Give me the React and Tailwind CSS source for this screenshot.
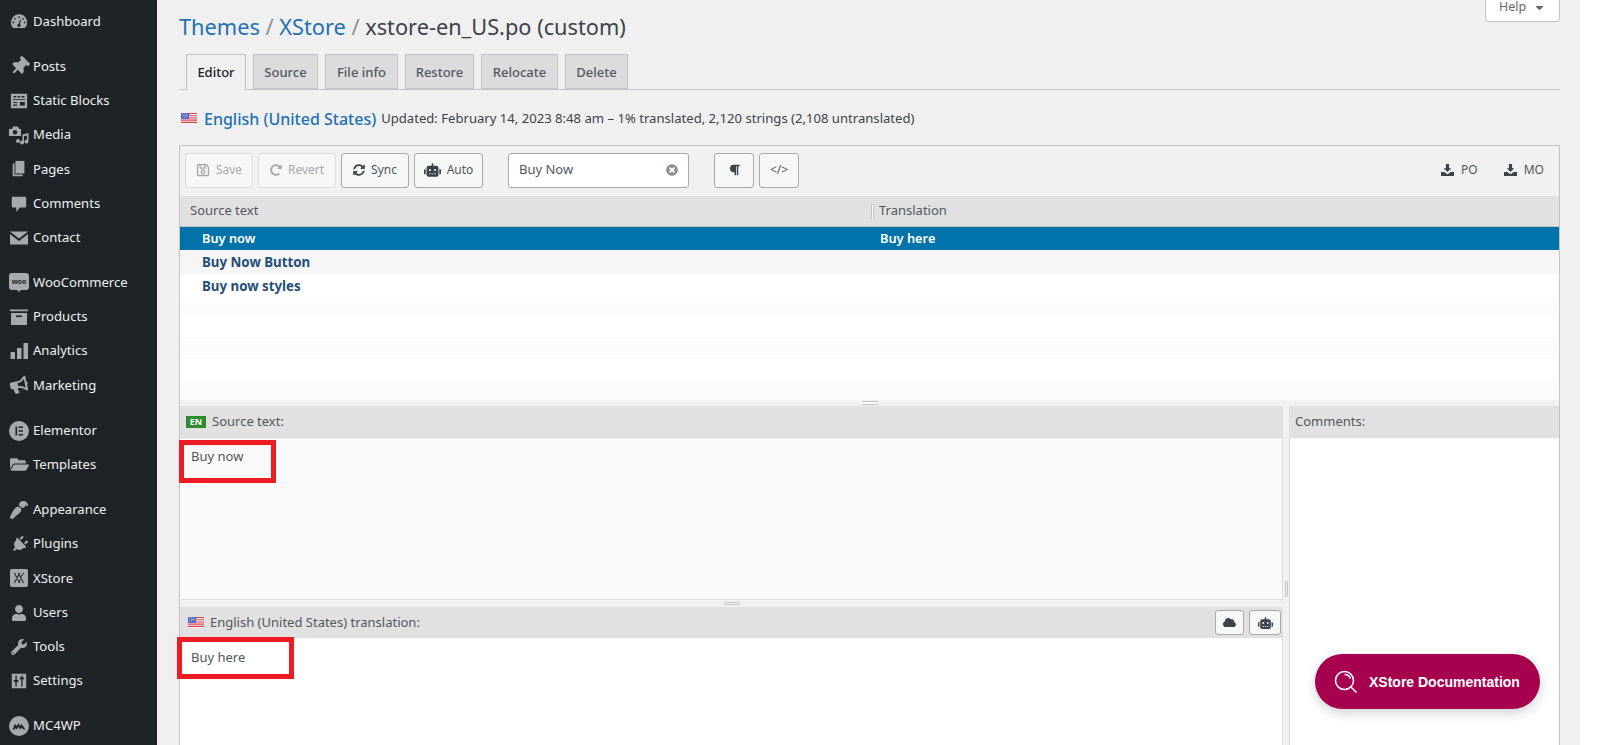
import {
  FaBullhorn, FaCloud, FaFolderOpen, FaParagraph, FaPaintBrush, FaPlug, FaRedoAlt, FaRegSave, FaRobot, FaSyncAlt, FaThumbtack, FaTimesCircle, FaUser, FaWrench, FaCaretDown,
} from 'react-icons/fa';

const Dial = () => (
  <svg viewBox="0 0 20 20" className="w-[18px] h-[18px]" fill="currentColor">
    <path fillRule="evenodd" d="M10 1.5A9 9 0 0 0 1 10.500c0 2.500 1 4.700 2.600 6.300h12.800A9 9 0 0 0 10 1.500zM10 3.500a1 1 0 1 1 0 2 1 1 0 0 1 0-2zM5.500 5.500a1 1 0 1 1 0 2 1 1 0 0 1 0-2zM14.500 5.500a1 1 0 1 1 0 2 1 1 0 0 1 0-2zM3.700 9.500a1 1 0 1 1 0 2 1 1 0 0 1 0-2zM16.300 9.500a1 1 0 1 1 0 2 1 1 0 0 1 0-2zM11.500 7l.8.300-1.200 5.300a1.700 1.700 0 1 1-1.600-.4z" />
  </svg>
);
const StaticBlocks = () => (
  <svg viewBox="0 0 20 20" className="w-[18px] h-[18px]" fill="currentColor">
    <path fillRule="evenodd" d="M1 2h18v16H1zM4 4.500V6h3V4.500zM8.500 4.500V6h3V4.500zM13 4.500V6h3V4.500zM3 8v1h14V8zM3.500 11v1.200h4.500V11zM3.500 14v1.200h4.500V14zM11 11v4h5.500v-4z" />
  </svg>
);
const Media = () => (
  <svg viewBox="0 0 20 20" className="w-[20px] h-[20px]" fill="currentColor">
    <path fillRule="evenodd" d="M0 4h3l1-2.500h5L10 4h2v7H0zM6 5a2.300 2.300 0 1 0 0 4.600A2.300 2.300 0 0 0 6 5z" />
    <path d="M13.500 9.500l6-1.500v8.500a2 2 0 1 1-1.500-1.900V10.500l-3 .8v6.200a2 2 0 1 1-1.500-1.900zM7 16a2 2 0 1 0 4 0 2 2 0 0 0-4 0z" />
  </svg>
);
const Pages = () => (
  <svg viewBox="0 0 20 20" className="w-[18px] h-[18px]" fill="currentColor">
    <path d="M6 1h10v14H6z" />
    <path d="M3 4h2v12h9v2H3z" />
  </svg>
);
const Bubble = () => (
  <svg viewBox="0 0 20 20" className="w-[18px] h-[18px]" fill="currentColor">
    <path d="M3 2h14a1 1 0 0 1 1 1v10a1 1 0 0 1-1 1h-6l-4 5v-5H3a1 1 0 0 1-1-1V3a1 1 0 0 1 1-1z" />
  </svg>
);
const Mail = () => (
  <svg viewBox="0 0 20 20" className="w-[20px] h-[20px]" fill="currentColor">
    <path d="M1 3.500h18L10 10.500z" />
    <path d="M1 6l9 7 9-7v10.500H1z" />
  </svg>
);
const Woo = () => (
  <span className="flex flex-col items-center w-[20px] h-[20px]">
    <span className="w-[20px] h-[17px] bg-[#a7aaad] rounded-[3px] flex items-center justify-center text-[#1d2327] text-[7px] font-bold leading-none">woo</span>
    <span className="w-0 h-0 border-x-[2px] border-x-transparent border-t-[2px] border-t-[#a7aaad]" />
  </span>
);
const Box = () => (
  <svg viewBox="0 0 20 20" className="w-[20px] h-[20px]" fill="currentColor">
    <path fillRule="evenodd" d="M1 2.500h18v1.800H1zM2 6h16v12H2zM7 8.500V10h6V8.500z" />
  </svg>
);
const Bars = () => (
  <svg viewBox="0 0 20 20" className="w-[20px] h-[20px]" fill="currentColor">
    <path d="M1.500 11h4.500v7H1.500zM8 7h4.500v11H8zM14.500 2H19v16h-4.500z" />
  </svg>
);
const Elementor = () => (
  <svg viewBox="0 0 20 20" className="w-[20px] h-[20px]" fill="currentColor">
    <path fillRule="evenodd" d="M10 0a10 10 0 1 0 0 20 10 10 0 0 0 0-20zM6.500 5.500H8v9H6.500zM9.500 5.500h4.500V7H9.500zM9.500 9.250h4.500v1.500H9.500zM9.500 13h4.500v1.500H9.500z" />
  </svg>
);
const XStore = () => (
  <span className="w-[18px] h-[18px] bg-[#a7aaad] rounded-[2px] flex items-center justify-center">
    <svg viewBox="0 0 18 18" className="w-[14px] h-[14px]" fill="none" stroke="#1d2327" strokeWidth="1.300">
      <path d="M3 2.500l7 13M10 2.500l-7 13M8 2.500l7 13M15 2.500l-3.500 5M11 11l-2.500 4" />
    </svg>
  </span>
);
const Sliders = () => (
  <svg viewBox="0 0 20 20" className="w-[18px] h-[18px]" fill="currentColor">
    <path fillRule="evenodd" d="M2 2h16v16H2zM6 4v5H4.300v2H6v5h1.500v-5h1.700V9H7.500V4zM12.500 4v2h-1.700v2h1.700v8H14V8h1.700V6H14V4z" />
  </svg>
);
const Mc4wp = () => (
  <span className="w-[20px] h-[20px] rounded-full bg-[#a7aaad] flex items-center justify-center">
    <svg viewBox="0 0 20 20" className="w-[14px] h-[14px]" fill="#1d2327">
      <path d="M1 15l3-8 3 3 2-4 3 4 2-3 5 8h-3l-2-3-2 3-3-4-2 4-2-2-1 2z" />
    </svg>
  </span>
);
const Download = () => (
  <svg viewBox="0 0 14 14" className="w-[13px] h-[13px]" fill="currentColor">
    <path d="M5.300 0h3.400v4.500h2.300L7 8.500l-4-4h2.300z" />
    <path d="M0 8.500h3.500L7 11l3.500-2.500H14V13H0z" />
  </svg>
);
const Flag = () => (
  <svg viewBox="0 0 16 11" className="w-[16px] h-[11px] shrink-0">
    <rect width="16" height="11" fill="#f4f4f4" />
    <path d="M0 0h16v1.100H0zM0 2.200h16v1.100H0zM0 4.400h16v1.100H0zM0 6.600h16v1.100H0zM0 8.800h16v1.100H0z" fill="#d9414b" />
    <rect width="8" height="5.800" fill="#4a62c4" />
    <path d="M1 1h1M3 1h1M5 1h1M2 2.500h1M4 2.500h1M6 2.500h1M1 4h1M3 4h1M5 4h1" stroke="#fff" strokeWidth=".7" />
  </svg>
);

const menu = [
  [['Dashboard', <Dial />]],
  [
    ['Posts', <FaThumbtack className="w-[19px] h-[19px] rotate-45" />],
    ['Static Blocks', <StaticBlocks />],
    ['Media', <Media />],
    ['Pages', <Pages />],
    ['Comments', <Bubble />],
    ['Contact', <Mail />],
  ],
  [
    ['WooCommerce', <Woo />],
    ['Products', <Box />],
    ['Analytics', <Bars />],
    ['Marketing', <FaBullhorn className="w-[18px] h-[18px] -rotate-12" />],
  ],
  [
    ['Elementor', <Elementor />],
    ['Templates', <FaFolderOpen className="w-[19px] h-[19px]" />],
  ],
  [
    ['Appearance', <FaPaintBrush className="w-[18px] h-[18px] rotate-180" />],
    ['Plugins', <FaPlug className="w-[17px] h-[17px] rotate-45" />],
    ['XStore', <XStore />],
    ['Users', <FaUser className="w-[16px] h-[16px]" />],
    ['Tools', <FaWrench className="w-[16px] h-[16px]" />],
    ['Settings', <Sliders />],
  ],
  [['MC4WP', <Mc4wp />]],
];

const tabs = [
  ['Source', 'w-[65px]'],
  ['File info', 'w-[73px]'],
  ['Restore', 'w-[69px]'],
  ['Relocate', 'w-[77px]'],
  ['Delete', 'w-[63px]'],
];

const Sidebar = () => (
  <aside className="w-[157px] shrink-0 bg-[#1d2327] pt-[4.5px] flex flex-col gap-[11px] text-[#f0f0f1] text-[13.1px]">
    {menu.map((group, i) => (
      <div key={i}>
        {group.map(([label, icon]) => (
          <div key={label} className="h-[34.2px] flex items-center">
            <span className="w-[33px] pl-[5px] shrink-0 flex items-center justify-center text-[#a7aaad]">{icon}</span>
            <span>{label}</span>
          </div>
        ))}
      </div>
    ))}
  </aside>
);

const ToolButton = ({ className, disabled, children }) => (
  <div className={`h-[35px] flex items-center justify-center gap-[6px] rounded-[3px] border text-[12px] bg-[#f6f7f7] ${disabled ? 'border-[#dcdcde] text-[#a7aaad]' : 'border-[#a7aaad] text-[#50575e]'} ${className}`}>
    {children}
  </div>
);

const Toolbar = () => (
  <div className="h-[50px] flex items-center pl-[5px] pr-[15px] pb-[2px]">
    <ToolButton disabled className="w-[68px]"><FaRegSave className="w-[14px] h-[14px]" />Save</ToolButton>
    <ToolButton disabled className="w-[78px] ml-[5px]"><FaRedoAlt className="w-[12px] h-[12px]" />Revert</ToolButton>
    <ToolButton className="w-[68px] ml-[5px]"><FaSyncAlt className="w-[12px] h-[12px] text-[#3c434a]" />Sync</ToolButton>
    <ToolButton className="w-[69px] ml-[5px] gap-[4px]"><FaRobot className="w-[17px] h-[14px] text-[#3c434a]" />Auto</ToolButton>
    <div className="w-[181px] h-[35px] ml-[25px] rounded-[3px] border border-[#a7aaad] bg-white flex items-center justify-between pl-[10px] pr-[10px] text-[13px] text-[#50575e]">
      <span>Buy Now</span>
      <FaTimesCircle className="w-[12px] h-[12px] text-[#8c8f94]" />
    </div>
    <ToolButton className="w-[40px] ml-[25px]"><FaParagraph className="w-[11px] h-[12px] text-[#3c434a]" /></ToolButton>
    <ToolButton className="w-[40px] ml-[5px] text-[11px]">&lt;/&gt;</ToolButton>
    <div className="ml-auto flex items-center text-[12px] text-[#50575e]">
      <span className="flex items-center gap-[7px] text-[#3c434a]"><Download /><span className="text-[#50575e]">PO</span></span>
      <span className="flex items-center gap-[7px] ml-[26px] text-[#3c434a]"><Download /><span className="text-[#50575e]">MO</span></span>
    </div>
  </div>
);

const Table = () => (
  <>
    <div className="h-[31px] bg-[#e1e1e1] border-b border-[#c3c4c7] flex items-center text-[13px] text-[#50575e]">
      <span className="w-[691px] pl-[10px] shrink-0">Source text</span>
      <span className="w-[3px] h-[15px] border-x border-[#c3c4c7] bg-white shrink-0" />
      <span className="pl-[5px]">Translation</span>
    </div>
    <div className="h-[23px] pt-[1px] bg-[#0073aa] flex items-center text-white text-[12.8px] font-semibold">
      <span className="w-[700px] pl-[22px] shrink-0">Buy now</span>
      <span>Buy here</span>
    </div>
    <div className="h-[24px] pt-[1px] bg-[#f6f6f6] flex items-center pl-[22px] text-[13.3px] font-bold text-[#1f4f78]">Buy Now Button</div>
    <div className="h-[24px] pt-[1px] bg-white flex items-center pl-[22px] text-[13.3px] font-bold text-[#1f4f78]">Buy now styles</div>
    <div className="h-[17px] bg-[#fcfcfc]" />
    <div className="h-[22px] bg-white" />
    <div className="h-[22px] bg-[#fcfcfc]" />
    <div className="h-[22px] bg-white" />
    <div className="h-[19px] bg-[#fcfcfc]" />
  </>
);

const Annotation = ({ className }) => (
  <div className={`absolute border-[5px] border-[#ed1c24] ${className}`} />
);

const Panes = () => (
  <div className="flex h-[339px]">
    <div className="w-[1103px] shrink-0 flex flex-col">
      <div className="h-[32px] bg-[#e1e1e1] border-b border-[#d8d8d8] flex items-center pl-[6px] pt-[1px] text-[13px] text-[#50575e]">
        <span className="w-[20px] h-[12px] bg-[#2e8b2e] text-white text-[9px] font-bold leading-[12px] text-center mr-[6px]">EN</span>
        Source text:
      </div>
      <div className="relative h-[162px] bg-[#f9f9f9] border-x border-b border-[#dcdcde] border-l-transparent pl-[10px] pt-[9px] text-[13px] text-[#50575e]">
        <div>Buy now</div>
        <Annotation className="left-[-2px] top-[2px] w-[97px] h-[43px]" />
      </div>
      <div className="h-[7px] flex items-center justify-center">
        <span className="w-[16px] h-[3px] border-y border-[#c3c4c7]" />
      </div>
      <div className="h-[31px] bg-[#e1e1e1] flex items-center pl-[8px] pr-[2px] text-[13px] text-[#50575e]">
        <Flag />
        <span className="ml-[6px] pt-[1px]">English (United States) translation:</span>
        <span className="ml-auto flex gap-[5px]">
          <span className="w-[29px] h-[25px] rounded-[3px] border border-[#a7aaad] bg-[#f6f7f7] flex items-center justify-center text-[#3c434a]"><FaCloud className="w-[13px] h-[11px]" /></span>
          <span className="w-[32px] h-[25px] rounded-[3px] border border-[#a7aaad] bg-[#f6f7f7] flex items-center justify-center text-[#3c434a]"><FaRobot className="w-[15px] h-[12px]" /></span>
        </span>
      </div>
      <div className="relative flex-1 bg-white border-r border-[#dcdcde] pl-[11px] pt-[10px] text-[13px] text-[#50575e]">
        Buy here
        <Annotation className="left-[-3px] top-[-1px] w-[117px] h-[42px]" />
      </div>
    </div>
    <div className="w-[6px] shrink-0 flex items-center justify-center">
      <span className="w-[3px] h-[16px] border-x border-[#c3c4c7] mt-[27px]" />
    </div>
    <div className="flex-1 flex flex-col">
      <div className="h-[32px] bg-[#e1e1e1] flex items-center pl-[6px] text-[13px] text-[#50575e]">Comments:</div>
      <div className="flex-1 bg-white border-l border-[#dcdcde]" />
    </div>
  </div>
);

export default function App() {
  return (
    <div className="flex h-[745px] overflow-hidden bg-white font-['Noto_Sans','Open_Sans',sans-serif]">
      <Sidebar />
      <main className="relative w-[1423px] shrink-0 bg-[#f0f0f1] pl-[22px] pr-[20px]">
        <div className="h-[54px] flex items-start justify-between">
          <h1 className="pt-[10px] text-[21.75px] leading-[34px] text-[#3c434a]">
            <span className="text-[#2271b1]">Themes</span>
            <span className="text-[#8c8f94]"> / </span>
            <span className="text-[#2271b1]">XStore</span>
            <span className="text-[#8c8f94]"> / </span>
            xstore-en_US.po (custom)
          </h1>
          <div className="w-[75px] h-[22px] pb-[7px] rounded-b-[4px] border border-t-0 border-[#c3c4c7] bg-white flex items-center justify-center gap-[7px] text-[12.5px] leading-none text-[#646970]">
            <span>Help</span>
            <FaCaretDown className="w-[13px] h-[13px]" />
          </div>
        </div>
        <div className="h-[36px] flex gap-[7px] pl-[7px] border-b border-[#c3c4c7] text-[13px]">
          <div className="w-[60px] h-[36px] pt-[1px] flex items-center justify-center border border-b-0 border-[#c3c4c7] bg-[#f0f0f1] text-[#1d2327] font-medium">Editor</div>
          {tabs.map(([label, width]) => (
            <div key={label} className={`${width} h-[35px] pt-[2px] flex items-center justify-center border border-[#c3c4c7] bg-[#dcdcde] text-[#50575e] font-medium`}>{label}</div>
          ))}
        </div>
        <div className="h-[55px] flex items-center pt-[2px] pl-[2px] text-[13.1px] text-[#3c434a]">
          <Flag />
          <span className="ml-[7px] text-[16px] font-medium text-[#2271b1]">English (United States)</span>
          <span className="ml-[5px]">Updated: February 14, 2023 8:48 am – 1% translated, 2,120 strings (2,108 untranslated)</span>
        </div>
        <section className="border border-b-0 border-[#c3c4c7] bg-[#f1f1f1] h-[600px]">
          <Toolbar />
          <Table />
          <div className="h-[6px] flex items-center justify-center">
            <span className="w-[16px] h-[4px] border-y border-[#c3c4c7] bg-white" />
          </div>
          <Panes />
        </section>
        <div className="absolute left-[1158px] top-[654px] w-[225px] h-[55px] pt-[1px] rounded-full bg-[#a6004f] shadow-[0_4px_12px_rgba(0,0,0,0.18)] flex items-center pl-[19px] text-white font-['Liberation_Sans',sans-serif] text-[14px] font-bold">
          <svg viewBox="0 0 24 24" className="w-[24px] h-[24px]" fill="none" stroke="currentColor" strokeWidth="1.500">
            <circle cx="10.500" cy="10.500" r="9" />
            <path d="M17 17l5.500 5.500M10.500 4.500a6 6 0 0 1 6 4" />
          </svg>
          <span className="ml-[11px]">XStore Documentation</span>
        </div>
      </main>
    </div>
  );
}
